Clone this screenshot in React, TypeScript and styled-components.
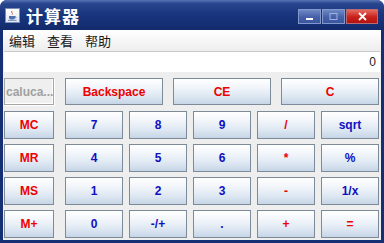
import styled, { createGlobalStyle } from 'styled-components';

const GlobalStyle = createGlobalStyle`
    html, body {
        margin: 0;
        padding: 0;
        background: #ffffff;
    }
`

const Window = styled.div`
    width: 384px;
    height: 243px;
    display: flex;
    flex-direction: column;
    background: #142f74;
    border-radius: 7px 7px 0 0;
    overflow: hidden;
    box-sizing: border-box;
`

const TitleBar = styled.div`
    height: 30px;
    flex-shrink: 0;
    display: flex;
    align-items: center;
    padding: 0 6px 0 5px;
    background: linear-gradient(to bottom, #5872b4 0%, #28468e 12%, #1a367f 45%, #152f74 80%, #122a6a 100%);
`

const AppIcon = styled.div`
    width: 15px;
    height: 15px;
    margin-top: 1px;
    background: linear-gradient(to bottom, #ffffff, #dfe6f2);
    border: 1px solid #7c8cb4;
    box-sizing: border-box;
    display: flex;
    align-items: center;
    justify-content: center;
`

const TitleText = styled.span`
    margin-left: 6px;
    color: #ffffff;
    font-family: "Noto Sans CJK SC", sans-serif;
    font-weight: 700;
    font-size: 17px;
    letter-spacing: 1px;
    flex: 1;
`

const WinButtons = styled.div`
    display: flex;
    margin-top: 2px;
`

const WinButton = styled.div<{ $close?: boolean }>`
    width: ${p => p.$close ? '32px' : '23px'};
    height: 15px;
    box-sizing: border-box;
    border: 1px solid ${p => p.$close ? '#b96b73' : '#8297cc'};
    background: ${p => p.$close
        ? 'linear-gradient(to bottom, #e46a60, #c8201a 55%, #b01410)'
        : 'linear-gradient(to bottom, #7088c6, #4560a8 55%, #3a56a0)'};
    display: flex;
    align-items: center;
    justify-content: center;
    margin-left: 1px;
`

const Frame = styled.div`
    flex: 1;
    display: flex;
    flex-direction: column;
    padding: 0 3px 3px 3px;
`

const MenuBar = styled.div`
    height: 20px;
    display: flex;
    align-items: center;
    gap: 12px;
    padding-left: 6px;
    background: linear-gradient(to bottom, #ffffff, #eeeeee);
    font-family: "Noto Sans CJK SC", sans-serif;
    font-size: 13px;
    color: #1a1a1a;
`

const Content = styled.div`
    flex: 1;
    background: #eeeeee;
    padding: 1px 1px 0 1px;
    display: flex;
    flex-direction: column;
`

const Display = styled.div`
    height: 21px;
    box-sizing: border-box;
    background: #ffffff;
    border-top: 1px solid #c8c8c8;
    display: flex;
    align-items: center;
    justify-content: flex-end;
    padding-right: 4px;
    font-family: "Liberation Sans", Arial, sans-serif;
    font-size: 12px;
    color: #222222;
`

const TopRow = styled.div`
    margin-top: 6px;
    height: 27px;
    display: grid;
    grid-template-columns: 50px 1fr;
    column-gap: 11px;
    padding-right: 1px;
`

const TopButtons = styled.div`
    display: grid;
    grid-template-columns: repeat(3, 1fr);
    column-gap: 10px;
`

const Keys = styled.div`
    margin-top: 6px;
    display: grid;
    grid-template-columns: 50px 1fr;
    column-gap: 11px;
    padding-right: 1px;
`

const MemoryColumn = styled.div`
    display: grid;
    grid-template-rows: repeat(4, 28px);
    row-gap: 5px;
`

const NumberGrid = styled.div`
    display: grid;
    grid-template-columns: repeat(5, 1fr);
    grid-template-rows: repeat(4, 28px);
    column-gap: 6px;
    row-gap: 5px;
`

const Key = styled.button<{ $red?: boolean }>`
    margin: 0;
    padding: 0;
    box-sizing: border-box;
    border: 1px solid #7d8b99;
    background: linear-gradient(to bottom, #ffffff 0%, #f1f5fa 35%, #dde7f2 70%, #c6d5e6 100%);
    font-family: "Liberation Sans", Arial, sans-serif;
    font-weight: 700;
    font-size: 12px;
    color: ${p => p.$red ? '#ee0000' : '#1010c0'};
    display: flex;
    align-items: center;
    justify-content: center;
`

const StatusBox = styled.div`
    box-sizing: border-box;
    border: 1px solid #a6a6a6;
    box-shadow: inset -1px -1px 0 #ffffff, 1px 1px 0 #ffffff;
    background: #efefef;
    font-family: "Liberation Sans", Arial, sans-serif;
    font-weight: 700;
    font-size: 12px;
    color: #a0a0a0;
    display: flex;
    align-items: center;
    padding-left: 1px;
    white-space: nowrap;
`

const memoryKeys = ['MC', 'MR', 'MS', 'M+'];

const numberKeys: { label: string, red?: boolean }[] = [
    { label: '7' }, { label: '8' }, { label: '9' }, { label: '/', red: true }, { label: 'sqrt' },
    { label: '4' }, { label: '5' }, { label: '6' }, { label: '*', red: true }, { label: '%' },
    { label: '1' }, { label: '2' }, { label: '3' }, { label: '-', red: true }, { label: '1/x' },
    { label: '0' }, { label: '-/+' }, { label: '.' }, { label: '+', red: true }, { label: '=', red: true },
];

const App = () => {
    return (
        <>
            <GlobalStyle />
            <Window>
                <TitleBar>
                    <AppIcon>
                        <svg width="11" height="11" viewBox="0 0 11 11">
                            <path d="M5 1 C3.5 2.5 6.5 3 5 4.5" stroke="#d2561e" strokeWidth="1" fill="none" />
                            <path d="M2 6 H8 V7.5 C8 9 7 9.5 5 9.5 C3 9.5 2 9 2 7.5 Z" fill="#5170b0" />
                            <path d="M8 6.5 C9.5 6.5 9.5 8 8 8" stroke="#5170b0" strokeWidth="0.8" fill="none" />
                            <path d="M1 10.3 H9.5" stroke="#5170b0" strokeWidth="0.8" />
                        </svg>
                    </AppIcon>
                    <TitleText>计算器</TitleText>
                    <WinButtons>
                        <WinButton>
                            <svg width="9" height="9" viewBox="0 0 9 9">
                                <rect x="1" y="6" width="7" height="2" fill="#ffffff" />
                            </svg>
                        </WinButton>
                        <WinButton>
                            <svg width="9" height="9" viewBox="0 0 9 9">
                                <rect x="1" y="1.5" width="7" height="6" fill="none" stroke="#9fb2e0" strokeWidth="1" />
                            </svg>
                        </WinButton>
                        <WinButton $close>
                            <svg width="9" height="9" viewBox="0 0 9 9">
                                <path d="M1 1 L8 8 M8 1 L1 8" stroke="#ffffff" strokeWidth="1.8" />
                            </svg>
                        </WinButton>
                    </WinButtons>
                </TitleBar>
                <Frame>
                    <MenuBar>
                        <span>编辑</span>
                        <span>查看</span>
                        <span>帮助</span>
                    </MenuBar>
                    <Content>
                        <Display>0</Display>
                        <TopRow>
                            <StatusBox>caluca...</StatusBox>
                            <TopButtons>
                                <Key $red>Backspace</Key>
                                <Key $red>CE</Key>
                                <Key $red>C</Key>
                            </TopButtons>
                        </TopRow>
                        <Keys>
                            <MemoryColumn>
                                {memoryKeys.map(k => <Key key={k} $red>{k}</Key>)}
                            </MemoryColumn>
                            <NumberGrid>
                                {numberKeys.map(k => <Key key={k.label} $red={k.red}>{k.label}</Key>)}
                            </NumberGrid>
                        </Keys>
                    </Content>
                </Frame>
            </Window>
        </>
    );
}

export default App;
